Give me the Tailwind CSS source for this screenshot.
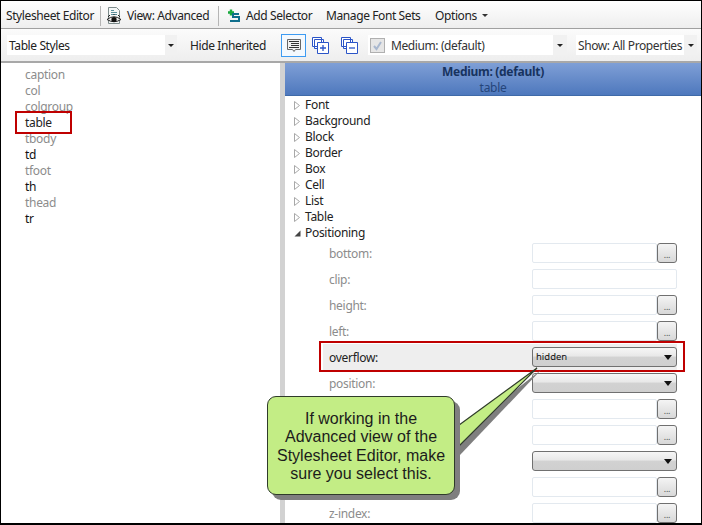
<!DOCTYPE html>
<html lang="en">
  <head>
    <meta charset="UTF-8" />
    <title>Stylesheet Editor</title>
    <script src="https://cdn.jsdelivr.net/npm/@tailwindcss/browser@4"></script>
  </head>
  <body class="bg-white">
    <div class="relative w-[702px] h-[525px] overflow-hidden border border-black border-b-2 flex flex-col bg-white font-['Noto_Sans',sans-serif] text-[12px] leading-4 tracking-[-0.3px] text-[#222]">
      <!-- top toolbar -->
      <div class="h-[28px] shrink-0 pt-[2px] flex items-center bg-gradient-to-b from-white to-[#eeeeee] border-b border-[#a0a0a0] tracking-[-0.4px]">
        <span class="ml-[5px] w-[94px]">Stylesheet Editor</span>
        <span class="w-px h-[20px] bg-[#b5b5b5]"></span>
        <svg class="ml-[5px] w-[16px] h-[18px]" viewBox="0 0 16 18">
          <path d="M2.5 .5h8l3 3v13h-11z" fill="#f4f7f7" stroke="#7d8b8b" />
          <path d="M5 3.500h3M5 5.500h6M5 7.500h6" stroke="#5a8f9c" />
          <path d="M1 12.500Q8 7 15 12.500Q8 17 1 12.500z" fill="#e8e8e8" stroke="#222" />
          <circle cx="8" cy="12.500" r="2.600" fill="#111" />
          <path d="M2 10l2-2M14 10l-2-2M8 8V7" stroke="#222" />
        </svg>
        <span class="ml-[5px] w-[91px]">View: Advanced</span>
        <span class="w-px h-[20px] bg-[#b5b5b5]"></span>
        <svg class="ml-[8px] w-[14px] h-[14px]" viewBox="0 0 14 14">
          <path d="M1 3.500h6M4 .5v6" stroke="#18a83c" stroke-width="2.400" />
          <path d="M12 5H6v3h6v4H3" fill="none" stroke="#0f6e8c" stroke-width="2" />
        </svg>
        <span class="ml-[5px] w-[80px]">Add Selector</span>
        <span class="w-[109px]">Manage Font Sets</span>
        <span>Options</span>
        <span class="ml-[5px] border-x-[3px] border-x-transparent border-t-[3px] border-t-[#333]"></span>
      </div>

      <!-- second toolbar -->
      <div class="h-[34px] shrink-0 flex items-center bg-gradient-to-b from-[#fbfbfb] to-[#eeeeee] border-b-2 border-[#a8a8a8] tracking-[-0.4px]">
        <div class="ml-[6px] w-[170px] h-[20px] bg-white flex items-center">
          <span class="ml-[2px] pt-[2px] flex-1">Table Styles</span>
          <span class="w-[12px] h-[20px] bg-[#f1f1f1] flex items-center justify-center">
            <span class="border-x-[3px] border-x-transparent border-t-[3px] border-t-[#222]"></span>
          </span>
        </div>
        <span class="ml-[13px] pt-[2px] w-[91px]">Hide Inherited</span>
        <div class="w-[25px] h-[23px] border border-[#3d9bf2] bg-[#f4f9fe] flex items-center justify-center">
          <svg class="w-[18px] h-[17px]" viewBox="0 0 18 17">
            <path d="M2.500 2.500h13v10h-5l-1.500 2-1.500-2h-5z" fill="#f2f2f2" stroke="#666" />
            <path d="M4 4.500h10M6 6.500h8M6 8.500h8M4 10.500h10" stroke="#333" />
          </svg>
        </div>
        <svg class="ml-[6px] w-[17px] h-[17px]" viewBox="0 0 17 17">
          <path d="M.5.5h9v9h-9zM2.500 2.500h9v9h-9z" fill="#fff" stroke="#2b55c8" />
          <path d="M5.500 5.500h11v11h-11z" fill="#fff" stroke="#2b55c8" />
          <path d="M8 11h6M11 8v6" stroke="#2b55c8" stroke-width="1.300" />
        </svg>
        <svg class="ml-[12px] w-[17px] h-[17px]" viewBox="0 0 17 17">
          <path d="M.5.5h9v9h-9zM2.500 2.500h9v9h-9z" fill="#fff" stroke="#2b55c8" />
          <path d="M5.500 5.500h11v11h-11z" fill="#fff" stroke="#2b55c8" />
          <path d="M8 11h6" stroke="#2b55c8" stroke-width="1.300" />
        </svg>
        <div class="ml-[10px] w-[199px] h-[20px] bg-white flex items-center">
          <span class="ml-[2px] w-[15px] h-[15px] border border-[#b0b0b0] bg-[#e6e6e6] flex items-center justify-center">
            <svg class="w-[11px] h-[11px]" viewBox="0 0 11 11"><path d="M2 6l2.500 3L9 2" fill="none" stroke="#a9b8cf" stroke-width="2" /></svg>
          </span>
          <span class="ml-[6px] pt-[2px] flex-1 text-[#333]">Medium: (default)</span>
          <span class="w-[14px] h-[20px] bg-[#f1f1f1] flex items-center justify-center">
            <span class="border-x-[3px] border-x-transparent border-t-[3px] border-t-[#222]"></span>
          </span>
        </div>
        <div class="ml-[9px] w-[121px] h-[20px] bg-white flex items-center">
          <span class="ml-[2px] pt-[2px] flex-1 whitespace-nowrap text-[#333]">Show: All Properties</span>
          <span class="w-[13px] h-[20px] bg-[#f1f1f1] flex items-center justify-center">
            <span class="border-x-[3px] border-x-transparent border-t-[3px] border-t-[#222]"></span>
          </span>
        </div>
      </div>

      <div class="flex-1 flex min-h-0">
        <!-- selector list -->
        <ul class="w-[279px] shrink-0 pt-[4px] pl-[24px] text-[#8c8c8c]">
          <li class="h-4">caption</li>
          <li class="h-4">col</li>
          <li class="h-4">colgroup</li>
          <li class="h-4 text-[#222]">table</li>
          <li class="h-4">tbody</li>
          <li class="h-4 text-[#111]">td</li>
          <li class="h-4">tfoot</li>
          <li class="h-4 text-[#111]">th</li>
          <li class="h-4">thead</li>
          <li class="h-4 text-[#111]">tr</li>
        </ul>
        <div class="w-[5px] shrink-0 bg-[#d2d2d2]"></div>

        <!-- properties -->
        <div class="flex-1 min-w-0">
          <div class="h-[33px] bg-gradient-to-b from-[#7f9fd6] to-[#4e78bd] border-b border-[#3f6aa8] text-center text-[#17335f]">
            <div class="font-bold pt-px">Medium: (default)</div>
            <div class="text-[#25457a]">table</div>
          </div>
          <ul class="pl-[9px]">
            <li class="h-4 pt-[2px] flex items-center"><span class="w-[11px]"><svg class="w-[6px] h-[9px]" viewBox="0 0 6 9"><path d="M.5.500l5 4-5 4z" fill="#fff" stroke="#a8a8a8" /></svg></span>Font</li>
            <li class="h-4 pt-[2px] flex items-center"><span class="w-[11px]"><svg class="w-[6px] h-[9px]" viewBox="0 0 6 9"><path d="M.5.500l5 4-5 4z" fill="#fff" stroke="#a8a8a8" /></svg></span>Background</li>
            <li class="h-4 pt-[2px] flex items-center"><span class="w-[11px]"><svg class="w-[6px] h-[9px]" viewBox="0 0 6 9"><path d="M.5.500l5 4-5 4z" fill="#fff" stroke="#a8a8a8" /></svg></span>Block</li>
            <li class="h-4 pt-[2px] flex items-center"><span class="w-[11px]"><svg class="w-[6px] h-[9px]" viewBox="0 0 6 9"><path d="M.5.500l5 4-5 4z" fill="#fff" stroke="#a8a8a8" /></svg></span>Border</li>
            <li class="h-4 pt-[2px] flex items-center"><span class="w-[11px]"><svg class="w-[6px] h-[9px]" viewBox="0 0 6 9"><path d="M.5.500l5 4-5 4z" fill="#fff" stroke="#a8a8a8" /></svg></span>Box</li>
            <li class="h-4 pt-[2px] flex items-center"><span class="w-[11px]"><svg class="w-[6px] h-[9px]" viewBox="0 0 6 9"><path d="M.5.500l5 4-5 4z" fill="#fff" stroke="#a8a8a8" /></svg></span>Cell</li>
            <li class="h-4 pt-[2px] flex items-center"><span class="w-[11px]"><svg class="w-[6px] h-[9px]" viewBox="0 0 6 9"><path d="M.5.500l5 4-5 4z" fill="#fff" stroke="#a8a8a8" /></svg></span>List</li>
            <li class="h-4 pt-[2px] flex items-center"><span class="w-[11px]"><svg class="w-[6px] h-[9px]" viewBox="0 0 6 9"><path d="M.5.500l5 4-5 4z" fill="#fff" stroke="#a8a8a8" /></svg></span>Table</li>
            <li class="h-4 pt-[2px] flex items-center"><span class="w-[11px]"><svg class="w-[7px] h-[7px]" viewBox="0 0 7 7"><path d="M6.500.500v6h-6z" fill="#444" /></svg></span>Positioning</li>
          </ul>

          <div class="pl-[44px] pr-[24px] text-[#8c8c8c]">
            <div class="h-[26px] flex items-center"><span class="flex-1 pt-[2px]">bottom:</span><span class="w-[125px] h-[20px] border border-[#e3e9ef] rounded-[2px] bg-white"></span><span class="w-[20px] h-[20px] rounded-[3px] border border-[#707070] bg-gradient-to-b from-[#f4f4f4] to-[#d8d8d8] text-center text-[9px] leading-[22px] text-[#555]">...</span></div>
            <div class="h-[26px] flex items-center"><span class="flex-1 pt-[2px]">clip:</span><span class="w-[145px] h-[20px] border border-[#e3e9ef] rounded-[2px] bg-white"></span></div>
            <div class="h-[26px] flex items-center"><span class="flex-1 pt-[2px]">height:</span><span class="w-[125px] h-[20px] border border-[#e3e9ef] rounded-[2px] bg-white"></span><span class="w-[20px] h-[20px] rounded-[3px] border border-[#707070] bg-gradient-to-b from-[#f4f4f4] to-[#d8d8d8] text-center text-[9px] leading-[22px] text-[#555]">...</span></div>
            <div class="h-[26px] flex items-center"><span class="flex-1 pt-[2px]">left:</span><span class="w-[125px] h-[20px] border border-[#e3e9ef] rounded-[2px] bg-white"></span><span class="w-[20px] h-[20px] rounded-[3px] border border-[#707070] bg-gradient-to-b from-[#f4f4f4] to-[#d8d8d8] text-center text-[9px] leading-[22px] text-[#555]">...</span></div>
            <div class="h-[26px] -ml-[6px] pl-[6px] flex items-center bg-[#eeeeee] text-[#222]"><span class="flex-1 pt-[2px]">overflow:</span><span class="w-[145px] h-[20px] rounded-[3px] border border-[#707070] bg-[linear-gradient(#f6f6f6_0,#e8e8e8_45%,#d2d2d2_50%,#cfcfcf_100%)] flex items-center justify-between px-[3px] text-[9.500px] tracking-normal text-[#111]">hidden<span class="mr-[1px] border-x-[4px] border-x-transparent border-t-[5px] border-t-[#111]"></span></span></div>
            <div class="h-[26px] flex items-center"><span class="flex-1 pt-[2px]">position:</span><span class="w-[145px] h-[20px] rounded-[3px] border border-[#707070] bg-[linear-gradient(#f6f6f6_0,#e8e8e8_45%,#d2d2d2_50%,#cfcfcf_100%)] flex items-center justify-end px-[3px]"><span class="mr-[1px] border-x-[4px] border-x-transparent border-t-[5px] border-t-[#111]"></span></span></div>
            <div class="h-[26px] flex items-center justify-end"><span class="w-[125px] h-[20px] border border-[#e3e9ef] rounded-[2px] bg-white"></span><span class="w-[20px] h-[20px] rounded-[3px] border border-[#707070] bg-gradient-to-b from-[#f4f4f4] to-[#d8d8d8] text-center text-[9px] leading-[22px] text-[#555]">...</span></div>
            <div class="h-[26px] flex items-center justify-end"><span class="w-[125px] h-[20px] border border-[#e3e9ef] rounded-[2px] bg-white"></span><span class="w-[20px] h-[20px] rounded-[3px] border border-[#707070] bg-gradient-to-b from-[#f4f4f4] to-[#d8d8d8] text-center text-[9px] leading-[22px] text-[#555]">...</span></div>
            <div class="h-[26px] flex items-center justify-end"><span class="w-[145px] h-[20px] rounded-[3px] border border-[#707070] bg-[linear-gradient(#f6f6f6_0,#e8e8e8_45%,#d2d2d2_50%,#cfcfcf_100%)] flex items-center justify-end px-[3px]"><span class="mr-[1px] border-x-[4px] border-x-transparent border-t-[5px] border-t-[#111]"></span></span></div>
            <div class="h-[26px] flex items-center justify-end"><span class="w-[125px] h-[20px] border border-[#e3e9ef] rounded-[2px] bg-white"></span><span class="w-[20px] h-[20px] rounded-[3px] border border-[#707070] bg-gradient-to-b from-[#f4f4f4] to-[#d8d8d8] text-center text-[9px] leading-[22px] text-[#555]">...</span></div>
            <div class="h-[26px] flex items-center"><span class="flex-1 pt-[2px]">z-index:</span><span class="w-[125px] h-[20px] border border-[#e3e9ef] rounded-[2px] bg-white"></span><span class="w-[20px] h-[20px] rounded-[3px] border border-[#707070] bg-gradient-to-b from-[#f4f4f4] to-[#d8d8d8] text-center text-[9px] leading-[22px] text-[#555]">...</span></div>
          </div>
        </div>
      </div>

      <!-- annotations: red boxes and callout over the app -->
      <div class="absolute left-[14px] top-[110px] w-[57px] h-[23px] border-2 border-[#bf0000]"></div>
      <div class="absolute left-[318px] top-[340px] w-[366px] h-[31px] border-2 border-[#bf0000]"></div>
      <svg class="absolute left-[440px] top-[360px] w-[110px] h-[100px]" viewBox="0 0 110 100">
        <path d="M19 72L100 9 19 94z" fill="#7f7f7f" />
        <path d="M14 67L96 7 14 89z" fill="#c3ed85" stroke="#2f3b2a" stroke-width="1.200" />
      </svg>
      <div class="absolute left-[266px] top-[395px] w-[188px] h-[99px] pt-[2px] rounded-[9px] border-[1.500px] border-[#2f3b2a] bg-[#c3ed85] shadow-[5px_5px_0_#7f7f7f] flex items-center justify-center text-center font-['Liberation_Sans',sans-serif] text-[16px] leading-[18.500px] tracking-normal text-[#1c1c1c]">
        <p>If working in the<br />Advanced view of the<br />Stylesheet Editor, make<br />sure you select this.</p>
      </div>
    </div>
  </body>
</html>
